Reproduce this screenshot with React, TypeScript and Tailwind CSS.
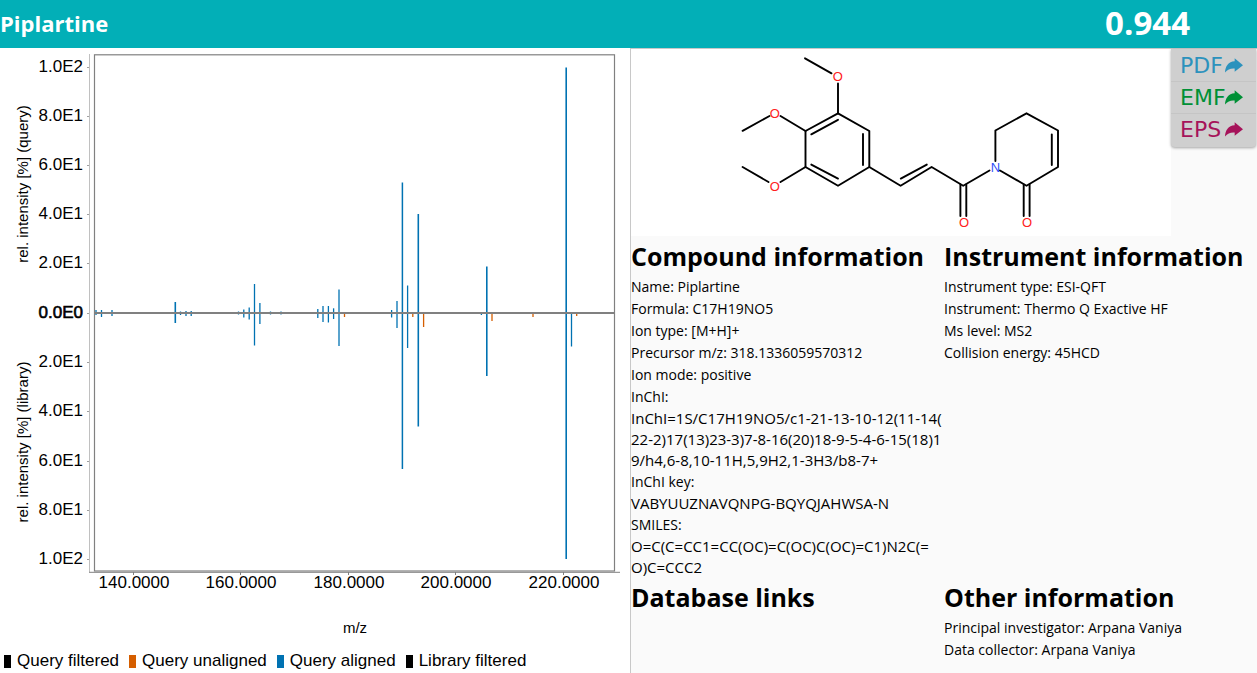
import React from "react";

type Peak = { x: number; top: number; bottom: number; width?: number; color?: string };

const BLUE = "#0072b2";
const ORANGE = "#d55e00";
const ZERO = 313;

const peaks: Peak[] = [
  { x: 96, top: 310, bottom: 315 },
  { x: 101.5, top: 310, bottom: 317 },
  { x: 112, top: 310, bottom: 316 },
  { x: 175.3, top: 302, bottom: 323, width: 1.6 },
  { x: 180.5, top: 311.5, bottom: 315 },
  { x: 186, top: 311, bottom: 316 },
  { x: 191.2, top: 311, bottom: 316 },
  { x: 238.5, top: 311.5, bottom: 314.5 },
  { x: 243.8, top: 309.5, bottom: 317.5 },
  { x: 249.2, top: 307.5, bottom: 319.5 },
  { x: 254.5, top: 284, bottom: 345.5 },
  { x: 259.9, top: 303, bottom: 324 },
  { x: 270.5, top: 311.5, bottom: 314.5 },
  { x: 281, top: 311.5, bottom: 314.5 },
  { x: 317.8, top: 309, bottom: 318 },
  { x: 323, top: 306, bottom: 322 },
  { x: 328.4, top: 306, bottom: 322.5 },
  { x: 333.6, top: 308.3, bottom: 319 },
  { x: 339, top: 289.5, bottom: 346 },
  { x: 344.5, top: 313, bottom: 317, color: ORANGE },
  { x: 391.6, top: 310, bottom: 317.5 },
  { x: 397, top: 301, bottom: 328 },
  { x: 402.4, top: 182.5, bottom: 469, width: 1.5 },
  { x: 407.6, top: 285.5, bottom: 348 },
  { x: 412.8, top: 313, bottom: 317, color: ORANGE },
  { x: 418.3, top: 214, bottom: 426.5, width: 1.6 },
  { x: 423.6, top: 313, bottom: 327, color: ORANGE },
  { x: 481.4, top: 312, bottom: 315 },
  { x: 486.8, top: 266.5, bottom: 376, width: 1.6 },
  { x: 492, top: 313, bottom: 321, color: ORANGE },
  { x: 533, top: 313, bottom: 317, color: ORANGE },
  { x: 566.2, top: 67.5, bottom: 559, width: 1.6 },
  { x: 571.5, top: 313, bottom: 346.5 },
  { x: 576.7, top: 313, bottom: 316, color: ORANGE },
];

const yTicks = [
  { y: 67, label: "1.0E2" },
  { y: 116, label: "8.0E1" },
  { y: 165, label: "6.0E1" },
  { y: 214, label: "4.0E1" },
  { y: 263, label: "2.0E1" },
  { y: 313, label: "0.0E0" },
  { y: 362, label: "2.0E1" },
  { y: 411, label: "4.0E1" },
  { y: 461, label: "6.0E1" },
  { y: 510, label: "8.0E1" },
  { y: 559, label: "1.0E2" },
];

const xTicks = [
  { x: 133, label: "140.0000" },
  { x: 240, label: "160.0000" },
  { x: 348, label: "180.0000" },
  { x: 455, label: "200.0000" },
  { x: 563, label: "220.0000" },
];

function SpectrumChart() {
  return (
    <svg
      viewBox="0 48 630 601"
      className="block w-full font-['Liberation_Sans',Arial,sans-serif]"
      role="img"
      aria-label="Mirror plot"
    >
      <g stroke="#c0c0c0" strokeWidth="1">
        <line x1="89.5" y1="54" x2="89.5" y2="572" />
        {yTicks.map((t) => (
          <line key={t.y} x1="87" x2="89" y1={t.y + 0.5} y2={t.y + 0.5} stroke="#a0a0a0" />
        ))}
      </g>
      {peaks.map((p) => (
        <line
          key={p.x}
          x1={p.x}
          x2={p.x}
          y1={p.top}
          y2={p.bottom}
          stroke={p.color ?? BLUE}
          strokeWidth={p.width ?? 1.3}
        />
      ))}
      <line x1="94" x2="614" y1={ZERO} y2={ZERO} stroke="#808080" strokeWidth="2" />
      <rect x="94.5" y="54.8" width="520" height="516.2" fill="none" stroke="#808080" strokeWidth="1.2" />
      <line x1="89" x2="620" y1="572.3" y2="572.3" stroke="#808080" strokeWidth="1" />
      {xTicks.map((t) => (
        <g key={t.x}>
          <line x1={t.x + 0.5} x2={t.x + 0.5} y1="572" y2="575" stroke="#808080" />
          <text x={t.x + 1} y="588" fontSize="17" textAnchor="middle">
            {t.label}
          </text>
        </g>
      ))}
      {yTicks.map((t) => (
        <text
          key={t.y}
          x="83"
          y={t.y + 5}
          fontSize="17"
          textAnchor="end"
          stroke={t.y === ZERO ? "#000" : "none"}
          strokeWidth="0.6"
        >
          {t.label}
        </text>
      ))}
      <text transform="translate(28 184) rotate(-90)" fontSize="15" textAnchor="middle">
        rel. intensity [%] (query)
      </text>
      <text transform="translate(28 442) rotate(-90)" fontSize="15" textAnchor="middle">
        rel. intensity [%] (library)
      </text>
      <text x="355" y="633" fontSize="15" textAnchor="middle">
        m/z
      </text>
    </svg>
  );
}

function Legend() {
  return (
    <ul className="flex h-6 items-center gap-[10px] whitespace-nowrap pl-1 font-['Liberation_Sans',Arial,sans-serif] text-[17px] leading-6">
      <li className="flex items-center gap-[6px]">
        <span className="h-[13px] w-[7px] bg-black" />
        Query filtered
      </li>
      <li className="flex items-center gap-[6px]">
        <span className="h-[13px] w-[7px] bg-[#d55e00]" />
        Query unaligned
      </li>
      <li className="flex items-center gap-[6px]">
        <span className="h-[13px] w-[7px] bg-[#0072b2]" />
        Query aligned
      </li>
      <li className="flex items-center gap-[6px]">
        <span className="h-[13px] w-[7px] bg-black" />
        Library filtered
      </li>
    </ul>
  );
}

function Molecule() {
  return (
    <svg viewBox="631 49 540 187" className="block w-full" role="img" aria-label="Structure of piplartine">
      <g fill="none" stroke="#000" strokeWidth="1.9" strokeLinecap="round" strokeLinejoin="round">
        <path d="M805 58.3 831.5 73.3M838 83.5V113.3" />
        <path d="M838 113.3 869.3 131V167L838 185.7 805.5 167V131Z" />
        <path d="M838 119.8 811.3 134.3M863 134V165M838 178.6 811.3 164.6" />
        <path d="M805.5 131 780.5 116M769.5 116 742.6 130.8" />
        <path d="M805.5 167 780.5 182M768.5 182 742.6 167" />
        <path d="M869.3 167 900.6 185.7 931.6 167 963.2 185.7 989.5 170.5" />
        <path d="M900.8 178.6 926.8 164.6" />
        <path d="M960.4 184.5V216M966.3 184.5V216M1023.7 184.5V216M1029.6 184.5V216" />
        <path d="M995.4 161V130.5L1026.5 113.3 1058 130.5V167L1026.5 185.7 1000 170.5" />
        <path d="M1051.8 134.5V165" />
      </g>
      <g
        className="font-['Liberation_Sans',Arial,sans-serif]"
        fontSize="13"
        textAnchor="middle"
        fill="#ff2020"
      >
        <text x="837.8" y="81.3">O</text>
        <text x="774.7" y="118">O</text>
        <text x="774.7" y="191">O</text>
        <text x="964" y="227.3">O</text>
        <text x="1027" y="227.3">O</text>
        <text x="995.5" y="172.3" fill="#3050f8">N</text>
      </g>
    </svg>
  );
}

function ShareArrow() {
  return (
    <svg viewBox="0 0 54 44" className="h-[15px] w-[18px] shrink-0" fill="currentColor" aria-hidden="true">
      <path d="M0 43C1 24 10 10 29 9V0L54 21 29 41V31C17 30 8 33 0 43Z" />
    </svg>
  );
}

function ExportButton({ label, className }: { label: string; className: string }) {
  return (
    <button
      type="button"
      className={`flex h-8 w-full cursor-pointer items-center border-b pl-[9px] text-left font-['DejaVu_Sans',Verdana,sans-serif] text-[22px] leading-[31px] ${className}`}
    >
      <span className="w-[45px]">{label}</span>
      <ShareArrow />
    </button>
  );
}

function ExportButtons() {
  return (
    <div className="mr-px flex w-[85px] shrink-0 flex-col self-start rounded-b bg-[#cfcfcf] py-px shadow-[0_1px_3px_rgba(0,0,0,0.35)]">
      <ExportButton label="PDF" className="border-[#c5c5c5] text-[#2c92bd]" />
      <ExportButton label="EMF" className="border-[#c5c5c5] text-[#009036]" />
      <ExportButton label="EPS" className="border-transparent text-[#a6135a]" />
    </div>
  );
}

function Heading({ children }: { children: React.ReactNode }) {
  return <h2 className="h-10 whitespace-nowrap text-[25px] font-bold leading-10">{children}</h2>;
}

export default function App() {
  return (
    <div className="flex min-h-screen flex-col bg-white font-['Open_Sans','Segoe_UI',sans-serif] text-black">
      <header className="flex h-12 items-center justify-between bg-[#02afb7] pb-[2px] pr-[67px] font-bold text-white">
        <h1 className="text-[22px] leading-8">Piplartine</h1>
        <span className="text-[33px] leading-8">0.944</span>
      </header>
      <main className="grid flex-1 grid-cols-[minmax(0,630fr)_minmax(0,627fr)]">
        <section>
          <SpectrumChart />
          <Legend />
        </section>
        <section className="border-l border-t border-[#c8c8c8] bg-[#fafafa]">
          <div className="flex">
            <div className="min-w-0 flex-1 bg-white">
              <Molecule />
            </div>
            <ExportButtons />
          </div>
          <div className="grid grid-cols-2 whitespace-nowrap text-[14px] leading-[22px]">
            <div className="-mb-px">
              <Heading>Compound information</Heading>
              <p>Name: Piplartine</p>
              <p>Formula: C17H19NO5</p>
              <p>Ion type: [M+H]+</p>
              <p>Precursor m/z: 318.1336059570312</p>
              <p>Ion mode: positive</p>
              <p>InChI:</p>
              <p className="text-[15px] leading-[21px]">
                InChI=1S/C17H19NO5/c1-21-13-10-12(11-14(
                <br />
                22-2)17(13)23-3)7-8-16(20)18-9-5-4-6-15(18)1
                <br />
                9/h4,6-8,10-11H,5,9H2,1-3H3/b8-7+
              </p>
              <p>InChI key:</p>
              <p className="text-[15px] leading-[21px]">VABYUUZNAVQNPG-BQYQJAHWSA-N</p>
              <p>SMILES:</p>
              <p className="text-[15px] leading-[21px]">
                O=C(C=CC1=CC(OC)=C(OC)C(OC)=C1)N2C(=
                <br />
                O)C=CCC2
              </p>
            </div>
            <div>
              <Heading>Instrument information</Heading>
              <p>Instrument type: ESI-QFT</p>
              <p>Instrument: Thermo Q Exactive HF</p>
              <p>Ms level: MS2</p>
              <p>Collision energy: 45HCD</p>
            </div>
            <div>
              <Heading>Database links</Heading>
            </div>
            <div>
              <Heading>Other information</Heading>
              <p>Principal investigator: Arpana Vaniya</p>
              <p>Data collector: Arpana Vaniya</p>
            </div>
          </div>
        </section>
      </main>
    </div>
  );
}
